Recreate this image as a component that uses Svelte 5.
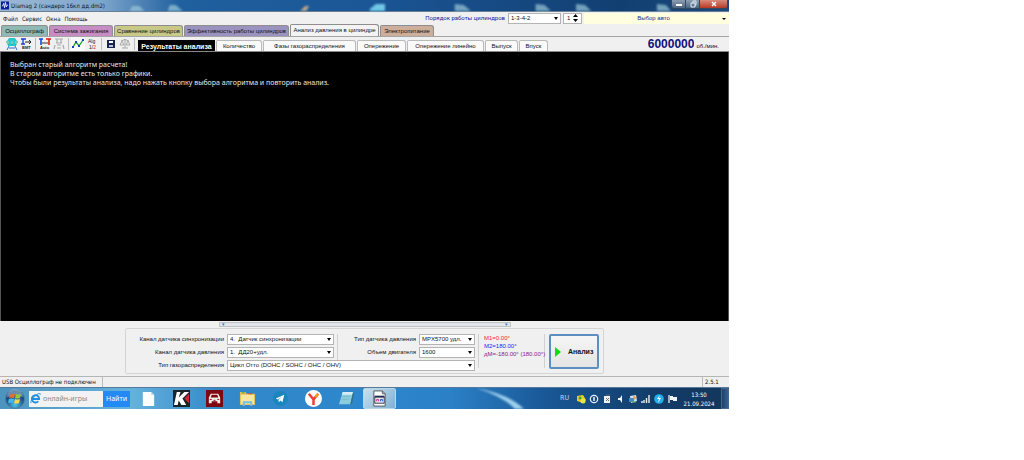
<script>
  const menu = ['Файл', 'Сервис', 'Окна', 'Помощь']

  const tabs = [
    { id: 'scope', label: 'Осциллограф', cls: 'teal', w: 47 },
    { id: 'ignition', label: 'Система зажигания', cls: 'pink', w: 64 },
    { id: 'compare', label: 'Сравнение цилиндров', cls: 'olive', w: 69 },
    { id: 'efficiency', label: 'Эффективность работы цилиндров', cls: 'violet', w: 105 },
    { id: 'pressure', label: 'Анализ давления в цилиндре', cls: 'plain', w: 89 },
    { id: 'power', label: 'Электропитание', cls: 'brown', w: 54 }
  ]

  const pages = [
    { id: 'results', label: 'Результаты анализа', w: 77 },
    { id: 'amount', label: 'Количество', w: 46 },
    { id: 'phases', label: 'Фазы газораспределения', w: 93 },
    { id: 'advance', label: 'Опережение', w: 49 },
    { id: 'linear', label: 'Опережение линейно', w: 77 },
    { id: 'exhaust', label: 'Выпуск', w: 33 },
    { id: 'intake', label: 'Впуск', w: 29 }
  ]

  const message = [
    'Выбран старый алгоритм расчета!',
    'В старом алгоритме есть только графики.',
    'Чтобы были результаты анализа, надо нажать кнопку выбора алгоритма и повторить анализ.'
  ]

  let activeTab = $state('pressure')
  let activePage = $state('results')
  let cylinder = $state(1)
  let query = $state('')
</script>

{#snippet combo(id, value)}
  <span class="combo">
    <select {id}><option>{value}</option></select>
  </span>
{/snippet}

<div class="desktop">
  <main class="window">
    <header class="titlebar">
      <svg class="app-icon" viewBox="0 0 9 9"><rect width="9" height="9" fill="#0a1f9c" /><path d="M1 5h1l1-3 1 5 1-6 1 5 1-2h1" fill="none" stroke="#fff" stroke-width=".9" /></svg>
      <h1>Diamag 2 (сандеро 16кл дд.dm2)</h1>
      <svg class="wallpaper" viewBox="0 0 560 11" preserveAspectRatio="none">
        <g fill="#9cc9d8">
          <path d="M24 11l3-5h7l5 5zM62 11l2-6h6l7 6z" opacity=".7" />
          <path d="M193 11l5-5h4l-3 5z" fill="#b9a98a" />
          <path d="M262 9l6-5h9v7h-15z" fill="#70c7e6" />
          <path d="M346 11V4l9 1 7 6zM426 11V4l9 1 6 6zM466 11V4l9 1 6 6zM546 11V4l9 1 5 6z" opacity=".7" />
        </g>
      </svg>
      <div class="caption-buttons">
        <button aria-label="Свернуть"><svg viewBox="0 0 12 8"><path d="M3 5h6" stroke="#fff" stroke-width="2" /></svg></button>
        <button aria-label="Развернуть"><svg viewBox="0 0 12 8"><path d="M4 3h4v4H4zM6 3V1h3v4H8" fill="none" stroke="#e5edf5" /></svg></button>
        <button class="close" aria-label="Закрыть"><svg viewBox="0 0 12 8"><path d="M4 2l4 4M8 2L4 6" stroke="#fff" stroke-width="1.4" /></svg></button>
      </div>
    </header>

    <div class="menubar">
      <nav>
        {#each menu as item}<button>{item}</button>{/each}
      </nav>
      <div class="order">
        <label for="order">Порядок работы цилиндров</label>
        {@render combo('order', '1-3-4-2')}
        <span class="spin">
          <input type="text" aria-label="Цилиндр" bind:value={cylinder} />
          <span class="arrows">
            <button aria-label="Больше" onclick={() => cylinder++}><svg viewBox="0 0 5 3"><path d="M0 3L2.500 0 5 3z" /></svg></button>
            <button aria-label="Меньше" onclick={() => cylinder--}><svg viewBox="0 0 5 3"><path d="M0 0l2.500 3L5 0z" /></svg></button>
          </span>
        </span>
        <button class="car">Выбор авто</button>
      </div>
    </div>

    <div class="tabs" role="tablist">
      {#each tabs as t}
        <button role="tab" class="tab {t.cls}" class:active={activeTab === t.id} aria-selected={activeTab === t.id}
          style:width="{t.w}px" onclick={() => (activeTab = t.id)}>{t.label}</button>
      {/each}
    </div>

    <div class="toolbar">
      <div class="tools">
        <button aria-label="Датчик"><svg viewBox="0 0 12 12"><path d="M3 0h6l2 3H1zM2 6h8v2H2z" fill="#28c7c5" /><path d="M0 4h12M1 6h10" stroke="#1da06c" /><path d="M3 8L1 12M9 8l2 4M3 10h6" fill="none" stroke="#2a6fd0" /><path d="M4 2v6M8 2v6" stroke="#19cfe0" stroke-width="2" /></svg></button>
        <button aria-label="ВМТ"><svg viewBox="0 0 12 12"><path d="M1 1h5M3 1v5M1 6h4" stroke="#173bd0" stroke-width="1.300" /><path d="M5 4h6M9 2l2 2-2 2" fill="none" stroke="#222" /><text x="2" y="11" class="tiny">ВМТ</text></svg></button>
        <i></i>
        <button aria-label="Авто"><svg viewBox="0 0 12 12"><path d="M0 1h4M2 1v6" stroke="#1446e0" stroke-width="1.600" /><path d="M7 1h5M10 1v6" stroke="#e01818" stroke-width="1.600" /><path d="M3 5h6" stroke="#333" /><text x="1" y="11" class="tiny">Auto</text></svg></button>
        <button aria-label="Масштаб" disabled><svg viewBox="0 0 12 12"><path d="M2 1h8M4 1v4M8 1v4M3 5h6M2 7l-1 4M10 7l1 4M4 10h4M4 7h4" stroke="#aaa" stroke-width="1.200" /></svg></button>
        <i></i>
        <button class="pressed" aria-label="График"><svg viewBox="0 0 12 12"><path d="M1 9l3-5 3 4 4-6" fill="none" stroke="#12a520" stroke-width="1.300" /><path d="M0 8h2v2H0zM3 3h2v2H3zM6 7h2v2H6zM10 1h2v2h-2z" fill="#1a43b2" /></svg></button>
        <button aria-label="Алгоритм"><svg viewBox="0 0 12 12"><text x="2" y="5" class="alg">Alg</text><text x="3" y="11" class="alg">1/<tspan fill="#e11">2</tspan></text></svg></button>
        <i></i>
        <button aria-label="Сохранить"><svg viewBox="0 0 12 12"><path d="M2 2h8v8H2z" fill="#19244f" /><path d="M4 3h4v2H4z" fill="#fff" /><path d="M4 7h4v2H4z" fill="#b9c1da" /></svg></button>
        <button aria-label="Весы" disabled><svg viewBox="0 0 12 12"><path d="M6 1v9M3 10h6M2 3q4-3 8 0M3 3L1 7h4zM9 3L7 7h4z" fill="none" stroke="#a9a9a9" /></svg></button>
        <i></i>
      </div>
      <div class="pages" role="tablist">
        {#each pages as p}
          <button role="tab" class:active={activePage === p.id} aria-selected={activePage === p.id}
            style:width="{p.w}px" onclick={() => (activePage = p.id)}>{p.label}</button>
        {/each}
      </div>
      <div class="rpm"><span class="digits"><b>6000000</b></span><span>об./мин.</span></div>
    </div>

    <section class="output">
      {#each message as line}<p>{line}</p>{/each}
    </section>

    <section class="settings">
      <div class="splitter"><span>▾</span><span>▾</span></div>
      <form class="group" onsubmit={(e) => e.preventDefault()}>
        <div class="fields">
          <label for="sync">Канал датчика синхронизации</label>
          {@render combo('sync', '4.\u00a0 Датчик синхронизации')}
          <label class="second" for="sensor">Тип датчика давления</label>
          {@render combo('sensor', 'MPX5700 удл.')}
          <label for="pressure">Канал датчика давления</label>
          {@render combo('pressure', '1.\u00a0 ДД20+удл.')}
          <label class="second" for="volume">Объем двигателя</label>
          {@render combo('volume', '1600')}
          <label for="cycle">Тип газораспределения</label>
          <div class="wide">{@render combo('cycle', 'Цикл Отто (DOHC / SOHC / OHC / OHV)')}</div>
        </div>
        <div class="marks">
          <span class="m1">М1=0.00°</span>
          <span class="m2">М2=180.00°</span>
          <span class="dm">дМ=-180.00° (180.00°)</span>
        </div>
        <button class="run"><svg viewBox="0 0 6 10"><path d="M0 0l6 5-6 5z" fill="#0be00b" /></svg>Анализ</button>
      </form>
    </section>

    <footer class="status"><span>USB Осциллограф не подключен</span><span></span><span>2.5.1</span></footer>

    <div class="taskbar">
      <button class="start" aria-label="Пуск">
        <svg viewBox="0 0 20 20">
          <defs><radialGradient id="orb" cy=".8"><stop offset="0" stop-color="#4fc3e8" /><stop offset="1" stop-color="#1c4c80" /></radialGradient></defs>
          <circle cx="10" cy="10" r="9.500" fill="url(#orb)" stroke="#4b7ea6" />
          <path d="M2 8a8 8 0 0 1 16 0q-8-3-16 0z" fill="#c7dce8" opacity=".45" />
          <path d="M5 6q2-2 5-1L9 9q-3-1-5 0z" fill="#ee6a30" /><path d="M11 5q2 1 5 0l-1 4q-3 1-5 0z" fill="#91c83f" />
          <path d="M4 10q2-1 5 0l-1 4q-3-1-5 0z" fill="#45b7ee" /><path d="M10 10q2 1 5 0l-1 4q-3 1-5 0z" fill="#fcd544" />
        </svg>
      </button>
      <form class="search" onsubmit={(e) => e.preventDefault()}>
        <svg viewBox="0 0 12 12"><path d="M3 6.500h7a4 4 0 1 0-1 2.500" fill="none" stroke="#218ee0" stroke-width="2" /><path d="M1 11Q0 8 6 3t5-1" fill="none" stroke="#218ee0" /></svg>
        <input type="text" aria-label="Поиск" placeholder="онлайн-игры" bind:value={query} />
        <button>Найти</button>
      </form>
      <div class="apps">
        <button aria-label="Документ"><svg viewBox="0 0 18 18"><path d="M3 2h9l3 3v12H3z" fill="#fafcfd" /><path d="M12 2v3h3z" fill="#b8c8d2" /></svg></button>
        <button aria-label="K"><svg viewBox="0 0 18 18"><path d="M0 0h18v18H0z" fill="#18232a" /><path d="M4 2h4L6 8l6-6h5l-7 7 4 7H9l-3-5-1 5H1z" fill="#fff" /><path d="M17 4v10l-5-5z" fill="#d32436" /></svg></button>
        <button aria-label="Авто"><svg viewBox="0 0 18 18"><path d="M0 0h18v18H0z" fill="#7d0811" /><path d="M5 4h8l2 4v6h-3v-2H6v2H3V8z" fill="#f5eaea" /><path d="M6 5h6l1 3H5z" fill="#7d0811" /><path d="M4 10h2M12 10h2M8 11h2" stroke="#7d0811" /></svg></button>
        <button aria-label="Проводник"><svg viewBox="0 0 18 18"><path d="M1 2h6l1 2h9v12H1z" fill="#e3bd58" /><path d="M2 5h14v10H2z" fill="#f8e6a0" /><path d="M3 3h3" stroke="#3ba845" /><path d="M10 4h4" stroke="#d64b3d" /><path d="M4 17v-5h10v5h-2v-3H6v3z" fill="#71bfe5" /></svg></button>
        <button aria-label="Telegram"><svg viewBox="0 0 18 18"><circle cx="9" cy="9" r="8" fill="#1b86bd" /><path d="M4 9l9-4-2 8-2-2-2 2v-3l4-3-5 3z" fill="#fff" /></svg></button>
        <button aria-label="Яндекс"><svg viewBox="0 0 18 18"><circle cx="9" cy="9" r="9" fill="#fff" /><path d="M4 4l5 6v6M14 4l-5 6" fill="none" stroke="#f23b32" stroke-width="2.600" /><path d="M11 7.500L14 4" stroke="#f79b22" stroke-width="2.600" /></svg></button>
        <button aria-label="Блокнот"><svg viewBox="0 0 18 18"><path d="M5 2h11l-3 13H1z" fill="#8ccddd" /><path d="M5 2h11l-1 3H4z" fill="#d6eef3" /><path d="M5 7h8M4 10h8" stroke="#7dbccc" /><path d="M16 2l-3 13 2-1 2-10z" fill="#347084" /></svg></button>
        <button class="current" aria-label="Diamag"><svg viewBox="0 0 18 18"><path d="M3 1h9l3 3v13H3z" fill="#fff" stroke="#555" /><path d="M12 1v3h3" fill="none" stroke="#555" /><path d="M4 7h10v7H4z" fill="#e7e9ef" stroke="#333a55" /><path d="M4 7h10" stroke="#222c50" stroke-width="2" /><path d="M6 12v-2h2v2" fill="none" stroke="#d42a7a" /><path d="M10 12v-2h2v2" fill="none" stroke="#2748d6" /></svg></button>
      </div>
      <svg class="swoosh" viewBox="0 0 160 21" preserveAspectRatio="none"><path d="M78 0q32 6 47 21h-9Q104 8 78 0z" fill="#9fd0ee" /></svg>
      <div class="tray">
        <span class="lang">RU</span>
        <svg viewBox="0 0 10 10"><path d="M1 2l6-1 3 5-3 3-6-2z" fill="#f0c928" /><circle cx="7" cy="7" r="2.500" fill="#e4e94b" /><circle cx="4" cy="4" r="1.500" fill="#38a93d" /></svg>
        <svg viewBox="0 0 10 10"><circle cx="5" cy="5" r="3.700" fill="none" stroke="#e8f0f7" stroke-width="1.200" /><path d="M5 3v4" stroke="#fff" stroke-width="1.400" /></svg>
        <svg viewBox="0 0 10 10"><path d="M2 2h6v7H2z" fill="#eef2f5" /><path d="M4 1h4M4 4l3 3M7 4L4 7" stroke="#65717c" /></svg>
        <svg viewBox="0 0 10 10"><path d="M3 4h2l2-3v8L5 6H3z" fill="#f5f8fa" /></svg>
        <svg viewBox="0 0 10 10"><path d="M2 2l6-1 1 6-6 2z" fill="#d5e2ec" /><path d="M1 4h5v4H1z" fill="#408cc8" /><path d="M5 2l4 1-3 3z" fill="#e99a42" /><path d="M4 8h4" stroke="#74b951" /></svg>
        <svg viewBox="0 0 10 10"><path d="M1 9V7M3 9V6M5.500 9V4M8 9V1" stroke="#e7eef4" stroke-width="1.400" /></svg>
        <svg viewBox="0 0 10 10"><circle cx="5" cy="5" r="4.800" fill="#24aeea" /><path d="M6 1L3 5h2L4 9l3-5H5z" fill="#fff" /></svg>
        <svg viewBox="0 0 10 10"><path d="M2 1v8" stroke="#fff" stroke-width="1.200" /><path d="M3 2h3v1h4v4H6V6H3z" fill="#f1f5f9" /></svg>
        <div class="clock"><span>13:50</span><span>21.09.2024</span></div>
        <button class="show-desktop" aria-label="Показать рабочий стол"></button>
      </div>
    </div>
  </main>
</div>

<style>
  :global(body) { margin: 0; background: #fff; }
  * { box-sizing: border-box; }
  button, input, select { font: inherit; color: inherit; margin: 0; padding: 0; border: 0; background: none; border-radius: 0; outline: 0; }
  button { cursor: pointer; white-space: nowrap; }
  svg { display: block; }

  .desktop { padding-right: 295px; }
  .window { background: #f0f0f0; color: #111; font: 6px/9px "Liberation Sans", Arial, sans-serif; white-space: nowrap; }

  .titlebar { display: flex; height: 12px; padding-left: 1px; border-bottom: 1px solid #6b7f94;
              background: linear-gradient(90deg, #9bb8d3, #7fa7cd 100px, #20609f 180px, #1b5696 50%, #123f72 85%, #1a4a7d); }
  .app-icon { width: 8px; height: 9px; margin-top: 1px; flex: none; }
  h1 { margin: 0 0 0 2px; font: 6px/12px "DejaVu Sans Condensed", "DejaVu Sans", sans-serif; color: #0b1420; }
  .wallpaper { flex: 1; min-width: 0; height: 11px; filter: blur(1px); }
  .caption-buttons { display: flex; height: 9px; margin-right: 1px; border: 1px solid #34475c; border-top: 0; border-radius: 0 0 3px 3px; overflow: hidden; }
  .caption-buttons button { width: 14px; background: linear-gradient(#8b9eb2, #4c6681); border-right: 1px solid #34475c; }
  .caption-buttons .close { width: 27px; border: 0; background: linear-gradient(#d98b7c, #b93822); }
  .caption-buttons svg { width: 12px; height: 8px; margin: 0 auto; }

  .menubar { display: flex; justify-content: space-between; height: 12px; }
  nav { display: flex; gap: 4px; padding-left: 3px; font: 6px/13px "DejaVu Sans Condensed", "DejaVu Sans", sans-serif; }
  .order { display: flex; align-items: center; gap: 2px; }
  .order label { color: #211d94; margin-right: 1px; font: 6px/12px Roboto, sans-serif; }
  .order .combo { width: 53px; }
  .combo { position: relative; display: block; height: 11px; border: 1px solid #b4b4b4; background: #fff; }
  .combo select { display: block; appearance: none; width: 100%; height: 9px; padding: 0 8px 0 2px; line-height: 9px; }
  .combo::after { content: ''; position: absolute; right: 2px; top: 3px; border: 2px solid transparent; border-top: 3px solid #000; border-bottom: 0; pointer-events: none; }
  .spin { display: flex; width: 19px; height: 11px; border: 1px solid #b4b4b4; background: #fff; }
  .spin input { width: 9px; padding-left: 3px; }
  .arrows { display: flex; flex-direction: column; justify-content: center; gap: 2px; }
  .arrows button, .arrows svg { display: block; width: 5px; height: 3px; }
  .car { position: relative; width: 145px; height: 11px; padding-right: 6px; background: #ffffdf; color: #211d94; }
  .car::after { content: ''; position: absolute; right: 3px; top: 5px; border: 2px solid transparent; border-top-color: #000; border-bottom: 0; }

  .tabs { display: flex; align-items: flex-end; gap: 1px; height: 13px; padding-left: 1px; border-bottom: 1px solid #a5a5a5; }
  .tab { height: 11px; border: 1px solid #8e8e8e; border-bottom: 0; border-radius: 2px 3px 0 0; }
  .teal { background: #8fb9b5; }
  .pink { background: #c58dc3; }
  .olive { background: #c8c887; }
  .violet { background: #9b93bf; }
  .brown { background: #cdae9b; }
  .plain { background: #ddd; }
  .tab.active { height: 12px; background: #f3f3f3; }

  .toolbar { display: flex; align-items: flex-end; height: 15px; border-bottom: 1px solid #888; }
  .tools { display: flex; align-items: center; height: 14px; padding-left: 5px; margin-right: 1px; }
  .tools button { width: 14px; height: 14px; }
  .tools svg { width: 12px; height: 12px; margin: 0 auto; }
  .tools i { width: 1px; height: 12px; margin: 0 2px; background: #bcbcbc; }
  .tools .pressed { background: #fafafa; }
  .tiny { font: bold 4px "Liberation Sans", sans-serif; fill: #222; }
  .alg { font: 5px "Liberation Sans", sans-serif; fill: #222; }
  .pages { display: flex; gap: 1px; }
  .pages button { height: 11px; border: 1px solid #b9b9b9; border-bottom: 0; border-radius: 2px 3px 0 0; background: #fafafa; }
  .pages .active { background: #000; border-color: #000; color: #fff; font-size: 7px; font-weight: bold; border-radius: 0; }
  .rpm { display: flex; align-items: flex-end; gap: 2px; margin-left: auto; padding-right: 10px; }
  .digits { display: flex; justify-content: flex-end; width: 46px; overflow: hidden; color: #10107c; font-size: 12px; line-height: 13px; }

  .output { height: 269px; padding: 8px 9px; border: 1px solid #555; border-width: 0 1px; background: #000; color: #e8e8e8; font: 7px/9px "Noto Sans", Verdana, sans-serif; }
  .output p { margin: 0; }

  .settings { padding: 1px 0 2px; border-bottom: 1px solid #b5b5b5; }
  .splitter { display: flex; justify-content: space-between; width: 292px; height: 5px; margin: 0 auto; padding: 0 2px; border: 1px solid #c2c2c2; background: #e0e5ec; color: #2979c9; font-size: 5px; line-height: 3px; }
  .group { display: flex; width: 479px; height: 46px; margin: 1px auto 0; padding: 5px 3px; border: 1px solid #d4d4d4; border-radius: 2px; }
  .fields { flex: none; display: grid; grid-template-columns: 95px 107px 79px 56px; column-gap: 3px; row-gap: 2px; align-content: start; padding-right: 3px; border-right: 1px solid #d0d0d0; }
  .fields label { text-align: right; line-height: 11px; }
  .fields .second { border-left: 1px solid #d0d0d0; margin-bottom: -2px; }
  .wide { grid-column: 2 / -1; }
  .marks { display: flex; flex-direction: column; width: 66px; margin-right: 4px; padding-left: 5px; border-right: 1px solid #d0d0d0; line-height: 8px; }
  .m1 { color: #f22; }
  .m2 { color: #22f; }
  .dm { color: #8b178b; }
  .run { display: flex; align-items: center; gap: 7px; width: 50px; height: 35px; padding-left: 4px; border: 2px solid #5c8fc0; border-radius: 2px; background: linear-gradient(#f6f6f6, #e4e4e4); font-size: 7px; font-weight: bold; }
  .run svg { width: 6px; height: 10px; flex: none; }

  .status { display: flex; height: 10px; font: 6px/10px "DejaVu Sans Condensed", "DejaVu Sans", sans-serif; }
  .status span { padding-left: 2px; border-right: 1px solid #bcbcbc; }
  .status span:first-child { width: 103px; }
  .status span:nth-child(2) { flex: 1; }
  .status span:last-child { width: 26px; border: 0; }

  .taskbar { display: flex; align-items: center; height: 22px; border-top: 1px solid #54799a; background: linear-gradient(90deg, #4c93bd, #65b2dc 130px, #3389c9 30%, #2d86cc 52%, #2b80c6 62%, #195796 75%, #123c68 90%, #14365b); }
  .start { width: 29px; }
  .start svg { width: 20px; height: 20px; margin: 0 auto; }
  .search { display: flex; align-items: center; width: 101px; height: 16px; background: #f2f2f2; font: 7px/16px "Noto Sans", sans-serif; }
  .search svg { width: 11px; height: 11px; margin: 0 2px 0 1px; flex: none; }
  .search input { flex: 1; min-width: 0; }
  .search input::placeholder { color: #8a8a8a; opacity: 1; }
  .search button { width: 27px; height: 16px; background: #2488f5; color: #fff; }
  .apps { display: flex; height: 21px; margin-left: 2px; }
  .apps button { width: 33px; }
  .apps svg { width: 17px; height: 17px; margin: 0 auto; }
  .apps .current { border: 1px solid #b9d7ea; border-radius: 2px; background: linear-gradient(135deg, #c8dfed, #7fb1d5); }
  .swoosh { flex: 1; min-width: 0; height: 21px; filter: blur(1px); }
  .tray { display: flex; align-items: center; gap: 3px; height: 21px; color: #fff; font: 6px/9px "DejaVu Sans Condensed", "DejaVu Sans", sans-serif; }
  .tray svg { width: 10px; height: 10px; }
  .lang { margin-right: 4px; color: #c6d5e5; font-size: 7px; }
  .clock { display: flex; flex-direction: column; align-items: center; width: 38px; }
  .show-desktop { width: 8px; height: 21px; border: 1px solid #44678e; background: linear-gradient(90deg, #1b416c, #3a618d); }
</style>
